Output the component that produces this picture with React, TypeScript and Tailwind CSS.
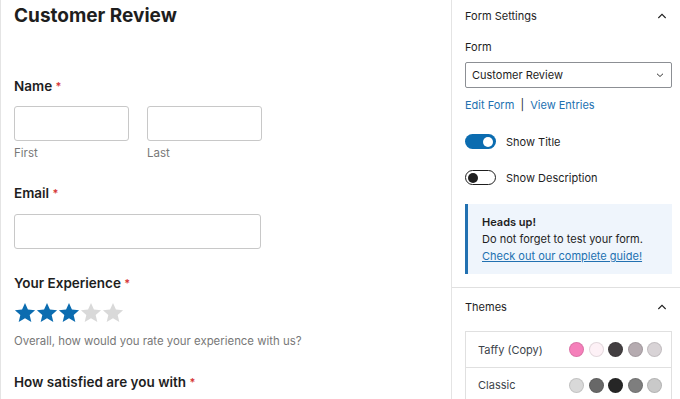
import React from "react";

const FONT = { fontFamily: "Inter, 'Noto Sans', sans-serif" };

function Star({ filled }: { filled: boolean }) {
  return (
    <svg viewBox="0 0 24 24" className="h-[22px] w-[22px]" aria-hidden="true">
      <path
        d="M12 1l3.2 7.2 7.8.7-5.9 5.2 1.8 7.7L12 17.8 5.1 21.8l1.8-7.7L1 8.9l7.8-.7z"
        fill={filled ? "#0b6cb0" : "#d9d9d9"}
      />
    </svg>
  );
}

function ChevronUp() {
  return (
    <svg viewBox="0 0 24 24" className="h-[16px] w-[16px]" aria-hidden="true">
      <path d="M6.5 15l5.5-5.5 5.5 5.5" fill="none" stroke="#1e1e1e" strokeWidth="1.6" />
    </svg>
  );
}

function Label({ children }: { children: React.ReactNode }) {
  return (
    <div className="text-[13.5px] font-semibold leading-[18px] text-[#1e1e1e]">
      {children} <span className="align-top text-[11px] text-[#d63638]">*</span>
    </div>
  );
}

const THEMES = [
  { name: "Taffy (Copy)", colors: ["#f57fba", "#fdf1f6", "#433f41", "#b5abb0", "#d8d3d6"] },
  { name: "Classic", colors: ["#d9d9d9", "#686868", "#262626", "#7e7e7e", "#c9c9c9"] },
];

export default function App() {
  return (
    <div className="flex h-[399px] w-[680px] overflow-hidden bg-white" style={FONT}>
      {/* ============ FORM PREVIEW ============ */}
      <section className="w-[452px] shrink-0 border-l border-r border-[#e4e4e4] pl-[13px] pt-[3px]">
        <h1 className="text-[19px] font-bold leading-[26px] text-[#1e1e1e]">Customer Review</h1>

        <div className="mt-[48px]">
          <Label>Name</Label>
          <div className="mt-[11px] flex gap-[18px]">
            <div>
              <div className="h-[35px] w-[115px] rounded-[3px] border border-[#c8c8c8]" />
              <div className="mt-[5px] text-[11.5px] leading-[14px] text-[#787878]">First</div>
            </div>
            <div>
              <div className="h-[35px] w-[115px] rounded-[3px] border border-[#c8c8c8]" />
              <div className="mt-[5px] text-[11.5px] leading-[14px] text-[#787878]">Last</div>
            </div>
          </div>
        </div>

        <div className="mt-[24px]">
          <Label>Email</Label>
          <div className="mt-[12px] h-[35px] w-[247px] rounded-[3px] border border-[#c8c8c8]" />
        </div>

        <div className="mt-[25px]">
          <Label>Your Experience</Label>
          <div className="mt-[10px] flex">
            {[0, 1, 2, 3, 4].map((i) => (
              <Star key={i} filled={i < 3} />
            ))}
          </div>
          <div className="mt-[10px] text-[11.4px] leading-[14px] text-[#787878]">
            Overall, how would you rate your experience with us?
          </div>
        </div>

        <div className="mt-[25px]">
          <Label>How satisfied are you with</Label>
        </div>
      </section>

      {/* ============ SIDEBAR ============ */}
      <aside className="flex-1 border-r border-[#e4e4e4] text-[11px] leading-[16px] text-[#1e1e1e]">
        <div className="border-b border-[#e0e0e0] px-[13px] pb-[13px]">
          <div className="flex h-[32px] items-center justify-between pr-[2px]">
            <span>Form Settings</span>
            <ChevronUp />
          </div>
          <div className="mt-[7px]">Form</div>
          <div className="mt-[7px] flex h-[26px] w-[207px] items-center justify-between rounded-[2px] border border-[#8c8f94] pl-[6px] pr-[5px]">
            <span>Customer Review</span>
            <svg viewBox="0 0 24 24" className="h-[12px] w-[12px]" aria-hidden="true">
              <path d="M6 9.5l6 5.5 6-5.5" fill="none" stroke="#1e1e1e" strokeWidth="1.8" />
            </svg>
          </div>
          <div className="mt-[9px] text-[#2271b1]">
            Edit Form <span className="mx-[3px] text-[#1e1e1e]">|</span> View Entries
          </div>

          <div className="mt-[21px] flex h-[15px] items-center gap-[10px]">
            <div className="relative h-[15px] w-[31px] rounded-full bg-[#0b6cb0]">
              <div className="absolute right-[3px] top-[2.5px] h-[10px] w-[10px] rounded-full bg-white" />
            </div>
            <span>Show Title</span>
          </div>
          <div className="mt-[21px] flex h-[15px] items-center gap-[10px]">
            <div className="relative h-[15px] w-[31px] rounded-full border border-[#1e1e1e] bg-white">
              <div className="absolute left-[2px] top-[1.5px] h-[10px] w-[10px] rounded-full bg-[#1e1e1e]" />
            </div>
            <span>Show Description</span>
          </div>

          <div className="mt-[19px] w-[207px] border-l-[3px] border-[#2271b1] bg-[#eff5fc] pb-[9px] pl-[14px] pt-[10px] leading-[17px]">
            <div className="font-semibold">Heads up!</div>
            <div>Do not forget to test your form.</div>
            <div className="text-[#2271b1] underline">Check out our complete guide!</div>
          </div>
        </div>

        <div className="px-[13px]">
          <div className="flex h-[38px] items-center justify-between pr-[2px]">
            <span>Themes</span>
            <ChevronUp />
          </div>
          <div className="mt-[5px] w-[207px] border border-[#e0e0e0]">
            {THEMES.map((t, i) => (
              <div
                key={t.name}
                className={`flex h-[35px] items-center justify-between pl-[12px] pr-[9px] ${
                  i > 0 ? "border-t border-[#e0e0e0]" : ""
                }`}
              >
                <span className="text-[#3c434a]">{t.name}</span>
                <div className="flex gap-[4.5px]">
                  {t.colors.map((c) => (
                    <div
                      key={c}
                      className="h-[15px] w-[15px] rounded-full border border-black/10"
                      style={{ backgroundColor: c }}
                    />
                  ))}
                </div>
              </div>
            ))}
          </div>
        </div>
      </aside>
    </div>
  );
}
